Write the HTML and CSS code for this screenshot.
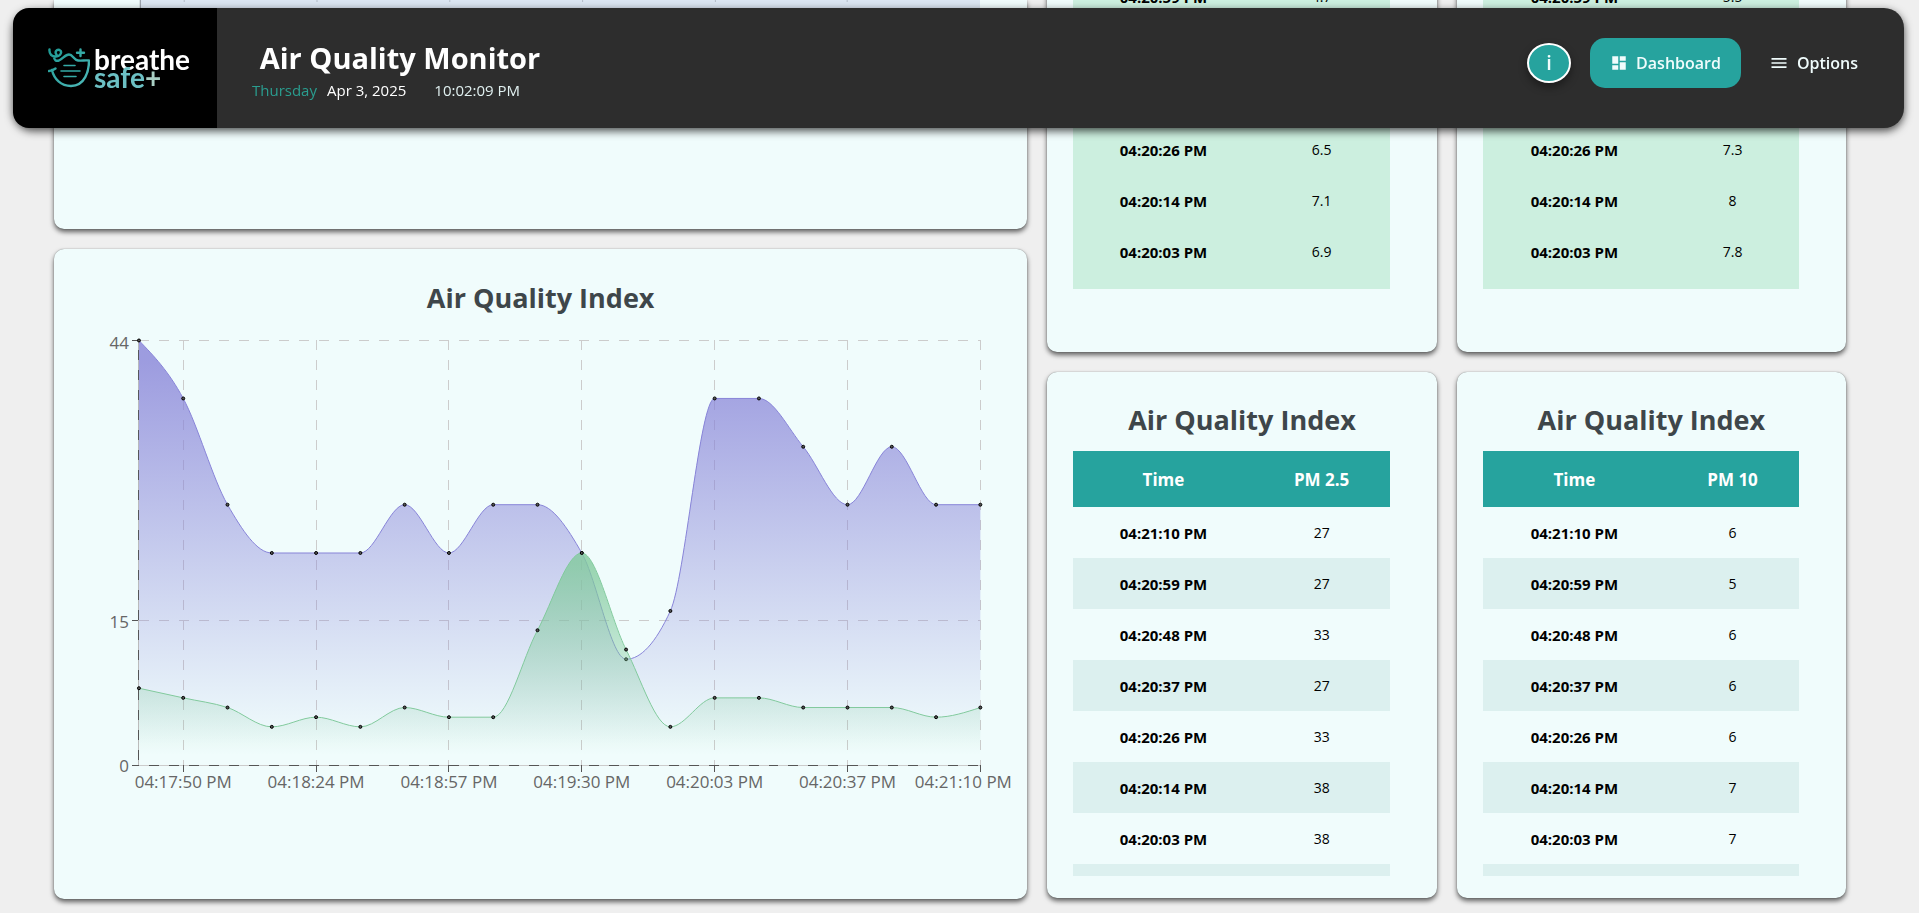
FILE: index.html
```html
<!DOCTYPE html>
<html lang="en">
<head>
<meta charset="utf-8">
<meta name="viewport" content="width=device-width, initial-scale=1">
<title>Air Quality Monitor</title>
<link rel="stylesheet" href="styles.css">
</head>
<body>
<header class="topbar">
  <a class="brand" href="#" aria-label="breathe safe+">
    <svg class="brand-mark" viewBox="0 0 42 40" width="42" height="40" aria-hidden="true">
      <defs>
        <linearGradient id="mark" x1="0" y1="0" x2="1" y2="1">
          <stop offset="0" stop-color="#1f9a94"/>
          <stop offset="1" stop-color="#4fb9b9"/>
        </linearGradient>
      </defs>
      <g fill="none" stroke="url(#mark)" stroke-width="2.400" stroke-linecap="round" stroke-linejoin="round">
        <path d="M1.500 1.500C1 6 4 9 8 8.500C13 8 14.500 3.500 11.500 2C8.500 1 6.500 4 8.500 6.500M6 8.500C6 12 8 13.500 11 12.500C15 11 17 6.500 21 6.500C25 6.500 25.500 12 30 12.500C34 13 37 12 41 12.500C41 23 37 38 23 38C13 38 6 31 4 22M1 23C3 22.500 5.500 22 7.500 20.500"/>
        <path stroke="#35aaa6" d="M32.500 1.500V8M29 4.800H36"/>
        <path stroke="#35aaa6" d="M16 17.500H27M13 23H32M16 28.500H28" stroke-width="1.600"/>
      </g>
    </svg>
    <span class="brand-name"><span>breathe</span><span class="brand-second">safe<span class="brand-plus">+</span></span></span>
  </a>
  <div class="heading">
    <h1>Air Quality Monitor</h1>
    <p class="clock"><span class="day">Thursday</span><span>Apr 3, 2025</span><time class="time">10:02:09 PM</time></p>
  </div>
  <nav class="actions">
    <button class="info" type="button" aria-label="Information">i</button>
    <button class="nav-button active" type="button">
      <svg viewBox="0 0 24 24" width="18" height="18" aria-hidden="true"><path fill="currentColor" d="M3 13h8V3H3v10zm0 8h8v-6H3v6zm10 0h8V11h-8v10zm0-18v6h8V3h-8z"/></svg>
      Dashboard
    </button>
    <button class="nav-button" type="button">
      <svg viewBox="0 0 24 24" width="20" height="20" aria-hidden="true"><path fill="currentColor" d="M3 18h18v-2H3v2zm0-5h18v-2H3v2zm0-7v2h18V6H3z"/></svg>
      Options
    </button>
  </nav>
</header>

<main class="board">
  <div class="column">
    <section class="card trend">
      <svg class="chart" viewBox="0 0 974 10" aria-hidden="true">
        <rect x="86" y="0" width="841" height="10" fill="#dce6f2"/>
        <path d="M86 0V10" stroke="#8c929c"/>
        <path d="M130 0V2M263 0V2M396 0V2M529 0V2M662 0V2M794 0V2" stroke="#b4bcc8"/>
      </svg>
    </section>
    <section class="card index-chart">
      <h2>Air Quality Index</h2>
      <svg class="chart" id="chart" viewBox="0 0 974 490" role="img" aria-label="PM 2.5 and PM 10 over time"></svg>
    </section>
  </div>

  <div class="column">
    <section class="card previous">
      <div class="table-view green">
        <table class="readings">
          <colgroup><col class="col-time"><col></colgroup>
          <tbody>
            <tr><th scope="row">04:20:59 PM</th><td>4.7</td></tr>
            <tr><th></th><td></td></tr>
            <tr><th></th><td></td></tr>
            <tr><th scope="row">04:20:26 PM</th><td>6.5</td></tr>
            <tr><th scope="row">04:20:14 PM</th><td>7.1</td></tr>
            <tr><th scope="row">04:20:03 PM</th><td>6.9</td></tr>
          </tbody>
        </table>
      </div>
    </section>
    <section class="card latest">
      <h2>Air Quality Index</h2>
      <div class="table-view">
        <table class="readings striped">
          <colgroup><col class="col-time"><col></colgroup>
          <thead><tr><th scope="col">Time</th><th scope="col">PM 2.5</th></tr></thead>
          <tbody>
            <tr><th scope="row">04:21:10 PM</th><td>27</td></tr>
            <tr><th scope="row">04:20:59 PM</th><td>27</td></tr>
            <tr><th scope="row">04:20:48 PM</th><td>33</td></tr>
            <tr><th scope="row">04:20:37 PM</th><td>27</td></tr>
            <tr><th scope="row">04:20:26 PM</th><td>33</td></tr>
            <tr><th scope="row">04:20:14 PM</th><td>38</td></tr>
            <tr><th scope="row">04:20:03 PM</th><td>38</td></tr>
            <tr><th></th><td></td></tr>
          </tbody>
        </table>
      </div>
    </section>
  </div>

  <div class="column">
    <section class="card previous">
      <div class="table-view green">
        <table class="readings">
          <colgroup><col class="col-time-wide"><col></colgroup>
          <tbody>
            <tr><th scope="row">04:20:59 PM</th><td>5.5</td></tr>
            <tr><th></th><td></td></tr>
            <tr><th></th><td></td></tr>
            <tr><th scope="row">04:20:26 PM</th><td>7.3</td></tr>
            <tr><th scope="row">04:20:14 PM</th><td>8</td></tr>
            <tr><th scope="row">04:20:03 PM</th><td>7.8</td></tr>
          </tbody>
        </table>
      </div>
    </section>
    <section class="card latest">
      <h2>Air Quality Index</h2>
      <div class="table-view">
        <table class="readings striped">
          <colgroup><col class="col-time-wide"><col></colgroup>
          <thead><tr><th scope="col">Time</th><th scope="col">PM 10</th></tr></thead>
          <tbody>
            <tr><th scope="row">04:21:10 PM</th><td>6</td></tr>
            <tr><th scope="row">04:20:59 PM</th><td>5</td></tr>
            <tr><th scope="row">04:20:48 PM</th><td>6</td></tr>
            <tr><th scope="row">04:20:37 PM</th><td>6</td></tr>
            <tr><th scope="row">04:20:26 PM</th><td>6</td></tr>
            <tr><th scope="row">04:20:14 PM</th><td>7</td></tr>
            <tr><th scope="row">04:20:03 PM</th><td>7</td></tr>
            <tr><th></th><td></td></tr>
          </tbody>
        </table>
      </div>
    </section>
  </div>
</main>
<script src="chart.js"></script>
</body>
</html>
```

FILE: styles.css
```css
* {
  box-sizing: border-box;
}

html {
  overflow: hidden;
}

body {
  margin: 0;
  background: #efefef;
  color: #000;
  font-family: "Open Sans", "Noto Sans", sans-serif;
  font-size: 14px;
}

h1,
h2,
p {
  margin: 0;
}

.topbar {
  position: fixed;
  top: 8px;
  left: 13px;
  right: 15px;
  z-index: 10;
  display: flex;
  height: 120px;
  padding-right: 26px;
  border-radius: 20px;
  background: #2d2d2d;
  box-shadow: 0 3px 8px rgba(0, 0, 0, 0.7);
  color: #fff;
}

.brand {
  display: flex;
  align-items: center;
  gap: 4px;
  width: 204px;
  padding-left: 35px;
  border-radius: 16px 0 0 16px;
  background: #000;
  color: #fff;
  text-decoration: none;
}

.brand-name {
  display: flex;
  flex-direction: column;
  font-family: Lato, sans-serif;
  font-size: 28px;
  font-weight: 700;
  line-height: 18px;
}

.brand-second {
  color: #6cc0c4;
}

.brand-plus {
  color: #a9cfc4;
}

.heading {
  display: flex;
  flex-direction: column;
  align-items: center;
  width: 296px;
  margin-left: 35px;
  padding-top: 30px;
}

.heading h1 {
  font-size: 29px;
  line-height: 40px;
  white-space: nowrap;
}

.clock {
  display: flex;
  align-self: flex-start;
  font-size: 15px;
  line-height: 24px;
  white-space: nowrap;
}

.day {
  margin-right: 10px;
  color: #2a9d8f;
}

.time {
  margin-left: 28px;
  color: #e0f0f0;
}

.actions {
  display: flex;
  align-items: center;
  margin-left: auto;
  height: 110px;
}

.info {
  width: 44px;
  height: 40px;
  margin-right: 19px;
  padding: 0;
  border: 2px solid #fff;
  border-radius: 50%;
  background: #26a39e;
  box-shadow: 0 4px 8px rgba(0, 0, 0, 0.4);
  color: #f0fcfc;
  font: 600 20px/30px "Open Sans", sans-serif;
}

.nav-button {
  display: flex;
  align-items: center;
  gap: 8px;
  height: 50px;
  padding: 0 20px;
  border: 0;
  border-radius: 15px;
  background: none;
  color: #f0fcfc;
  font: 600 16px/24px "Open Sans", sans-serif;
}

.active {
  margin-right: 8px;
  background: #26a39e;
}

.board {
  display: grid;
  grid-template-columns: 5fr 2fr 2fr;
  gap: 20px;
  align-items: start;
  padding: 0 73px 14px 54px;
}

.column {
  display: flex;
  flex-direction: column;
  gap: 20px;
}

.card {
  border-radius: 10px;
  background: #f0fcfc;
  box-shadow: 0 3px 5px rgba(0, 0, 0, 0.6), 0 0 1px rgba(0, 0, 0, 0.5);
}

.card h2 {
  color: #3e464a;
  font-size: 27px;
  line-height: 40px;
  text-align: center;
}

.trend {
  height: 229px;
  border-radius: 0 0 10px 10px;
}

.index-chart {
  height: 650px;
  padding-top: 29px;
}

.chart {
  display: block;
  width: 100%;
  height: auto;
}

.chart text {
  fill: #666;
  font-size: 17px;
}

.lines {
  shape-rendering: crispEdges;
}

.previous {
  margin-top: -29px;
  padding: 0 47px 63px 26px;
}

.latest {
  padding: 28px 47px 22px 26px;
}

.latest h2 {
  margin: 0 -47px 11px -26px;
}

.table-view {
  height: 425px;
  overflow: hidden;
}

.green {
  height: 318px;
  background: #ccefdf;
}

.readings {
  width: 100%;
  border-collapse: collapse;
  table-layout: fixed;
  text-align: center;
}

.col-time {
  width: 57%;
}

.col-time-wide {
  width: 58%;
}

.readings th,
.readings td {
  height: 51px;
  padding: 0;
}

.readings th {
  font-size: 15px;
}

.readings thead th {
  height: 56px;
  background: #26a39e;
  color: #fff;
  font-size: 17px;
}

.striped tbody tr:nth-child(even) {
  background: #dcf0ef;
}
```

FILE: chart.js
```js
const pm25 = [44, 38, 27, 22, 22, 22, 27, 22, 27, 27, 22, 11, 16, 38, 38, 33, 27, 33, 27, 27];
const pm10 = [8, 7, 6, 4, 5, 4, 6, 5, 5, 14, 22, 12, 4, 7, 7, 6, 6, 6, 5, 6];
const labels = { 1: "04:17:50 PM", 4: "04:18:24 PM", 7: "04:18:57 PM", 10: "04:19:30 PM", 13: "04:20:03 PM", 16: "04:20:37 PM", 19: "04:21:10 PM" };

const left = 85, right = 927, ceiling = 22.5, floor = 447.8, max = 44;
const step = (right - left) / 19;
const X = i => left + i * step;
const Y = v => floor - v * (floor - ceiling) / max;

// Monotone cubic interpolation, so flat stretches stay flat.
function curve(values) {
  const n = values.length, y = values.map(Y), slope = [], m = [];
  for (let i = 0; i < n - 1; i++) slope.push((y[i + 1] - y[i]) / step);
  for (let i = 1; i < n - 1; i++) {
    const a = slope[i - 1], b = slope[i];
    m[i] = (Math.sign(a) + Math.sign(b)) * Math.min(Math.abs(a), Math.abs(b), 0.5 * Math.abs((a + b) / 2)) || 0;
  }
  m[0] = (3 * slope[0] - m[1]) / 2;
  m[n - 1] = (3 * slope[n - 2] - m[n - 2]) / 2;
  let d = `M${X(0)},${y[0]}`;
  for (let i = 0; i < n - 1; i++) {
    d += `C${X(i) + step / 3},${y[i] + m[i] * step / 3} ${X(i + 1) - step / 3},${y[i + 1] - m[i + 1] * step / 3} ${X(i + 1)},${y[i + 1]}`;
  }
  return d;
}

function area(values, color, id) {
  const line = curve(values);
  const dots = values.map((v, i) => `<circle cx="${X(i)}" cy="${Y(v)}" r="1.5" fill="#555" stroke="#000"/>`).join("");
  return `<path d="${line}L${right},${floor}L${left},${floor}Z" fill="url(#${id})"/><path d="${line}" fill="none" stroke="${color}"/>${dots}`;
}

const gradient = (id, color) =>
  `<linearGradient id="${id}" x1="0" y1="0" x2="0" y2="1"><stop offset="5%" stop-color="${color}" stop-opacity="0.8"/><stop offset="95%" stop-color="${color}" stop-opacity="0"/></linearGradient>`;

let lines = `<path d="M${left},${floor}H${right}M${left},${ceiling}V${floor}" stroke="#555" fill="none"/>`;
let text = "";
for (const v of [0, 15, 44]) {
  lines += `<path d="M${left - 7},${Y(v)}H${left}" stroke="#555"/>`;
  lines += `<path d="M${left},${Y(v)}H${right}" stroke="#ccc" stroke-dasharray="10 10"/>`;
  text += `<text x="${left - 10}" y="${Y(v) + (v === max ? 9 : 7)}" text-anchor="end">${v}</text>`;
}
lines += `<path d="M${left},${ceiling}V${floor}" stroke="#bbb" stroke-dasharray="10 10"/>`;
for (const [i, label] of Object.entries(labels)) {
  const x = X(Number(i));
  lines += `<path d="M${x},${floor}V${floor + 7}" stroke="#555"/>`;
  lines += `<path d="M${x},${ceiling}V${floor}" stroke="#ccc" stroke-dasharray="10 10"/>`;
  text += `<text x="${i === "19" ? x - 17 : x}" y="${floor + 23}" text-anchor="middle">${label}</text>`;
}
document.getElementById("chart").innerHTML =
  `<defs>${gradient("fill25", "#8884d8")}${gradient("fill10", "#82ca9d")}</defs>` +
  `<g class="lines">${lines}</g>${text}` +
  area(pm25, "#8884d8", "fill25") + area(pm10, "#82ca9d", "fill10");
```
